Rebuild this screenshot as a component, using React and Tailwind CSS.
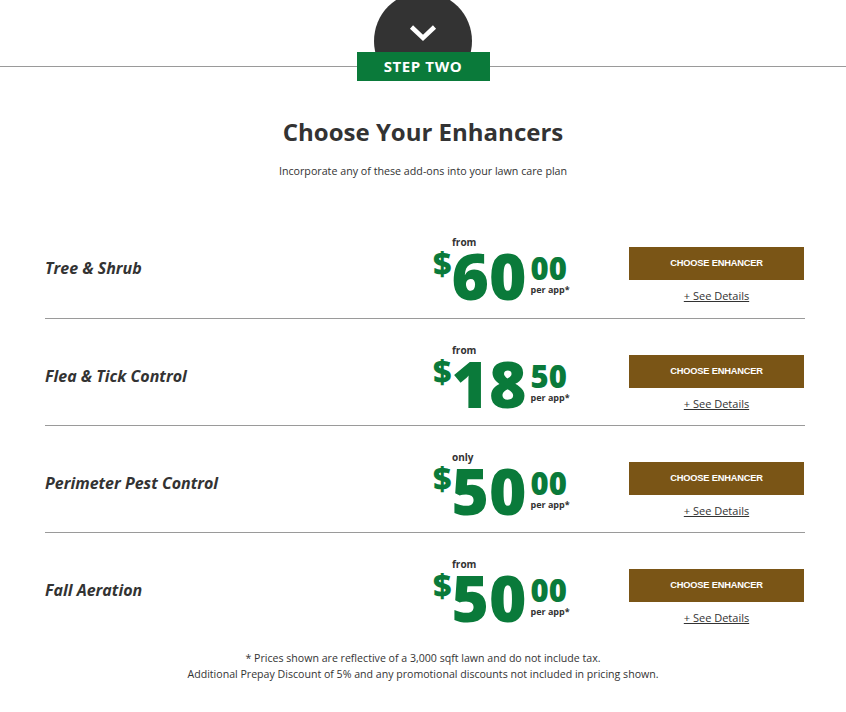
import React from "react";

const enhancers = [
  { name: "Tree & Shrub", label: "from", dollars: "60", cents: "00" },
  { name: "Flea & Tick Control", label: "from", dollars: "18", cents: "50" },
  { name: "Perimeter Pest Control", label: "only", dollars: "50", cents: "00" },
  { name: "Fall Aeration", label: "from", dollars: "50", cents: "00" },
];

const StepHeader = () => (
  <div className="flex items-center pt-[52px] h-[81px] overflow-hidden">
    <div className="flex-1 h-px bg-[#9a9a9a]" />
    <div className="relative w-[133px] h-[29px]">
      {/* dark tab behind the badge, clipped at the badge's bottom edge */}
      <div className="absolute left-1/2 -translate-x-1/2 top-[-60px] w-[98px] h-[98px] rounded-full bg-[#333333] flex justify-center">
        <svg className="mt-[32px]" width="28" height="18" viewBox="0 0 28 18" fill="none">
          <path d="M2.5 3 L14 14 L25.5 3" stroke="white" strokeWidth="4.5" strokeLinecap="butt" strokeLinejoin="miter" />
        </svg>
      </div>
      <div className="relative h-full bg-[#0a7a3a] flex items-center justify-center text-white text-[15px] font-bold tracking-[0.6px] leading-none">
        STEP TWO
      </div>
    </div>
    <div className="flex-1 h-px bg-[#9a9a9a]" />
  </div>
);

const Price = ({ label, dollars, cents }) => (
  <div className="flex flex-col pt-[26px] text-[#0a7a3a]">
    <div className="pl-[19px] h-[10px] text-[10px] leading-[10px] font-bold text-[#333]">{label}</div>
    <div className="flex items-start -mt-[3px]">
      <span className="text-[32px] leading-none font-extrabold mt-[3px]">$</span>
      <span className="text-[64px] leading-none font-extrabold">{dollars}</span>
      <div className="flex flex-col ml-[4px] mt-[9px]">
        <span className="text-[31px] leading-none font-extrabold">{cents}</span>
        <span className="text-[9px] leading-none font-bold text-[#333] mt-[1px]">per app*</span>
      </div>
    </div>
  </div>
);

const Row = ({ item, first }) => (
  <div className={`flex h-[107px] ${first ? "" : "border-t border-[#9a9a9a]"}`}>
    <div className="w-[388px] pt-[45px]">
      <h3 className="text-[16px] leading-6 font-bold italic text-[#333]">{item.name}</h3>
    </div>
    <div className="w-[196px]">
      <Price label={item.label} dollars={item.dollars} cents={item.cents} />
    </div>
    <div className="w-[175px] pt-[36px] flex flex-col items-center">
      <button className="w-full h-[33px] bg-[#7a5516] text-white text-[9.3px] font-bold tracking-[-0.2px] uppercase" style={{ fontFamily: '"Liberation Sans", Arial, sans-serif' }}>
        Choose Enhancer
      </button>
      <a href="#" className="mt-[8px] text-[11px] leading-[15px] text-[#333] underline">+ See Details</a>
    </div>
  </div>
);

export default function App() {
  return (
    <div className="w-[846px] min-h-[712px] bg-white overflow-hidden text-[#333]" style={{ fontFamily: '"Open Sans", "Noto Sans", sans-serif' }}>
      <StepHeader />

      <h1 className="mt-[35px] text-center text-[24px] leading-8 font-bold text-[#333]">Choose Your Enhancers</h1>
      <p className="mt-[15px] text-center text-[10.7px] leading-4">Incorporate any of these add-ons into your lawn care plan</p>

      <div className="ml-[45px] w-[760px] mt-[32px]">
        {enhancers.map((item, i) => (
          <Row key={item.name} item={item} first={i === 0} />
        ))}
      </div>

      <div className="mt-[11px] text-center text-[10.6px] leading-4">
        <p>* Prices shown are reflective of a 3,000 sqft lawn and do not include tax.</p>
        <p>Additional Prepay Discount of 5% and any promotional discounts not included in pricing shown.</p>
      </div>
    </div>
  );
}
